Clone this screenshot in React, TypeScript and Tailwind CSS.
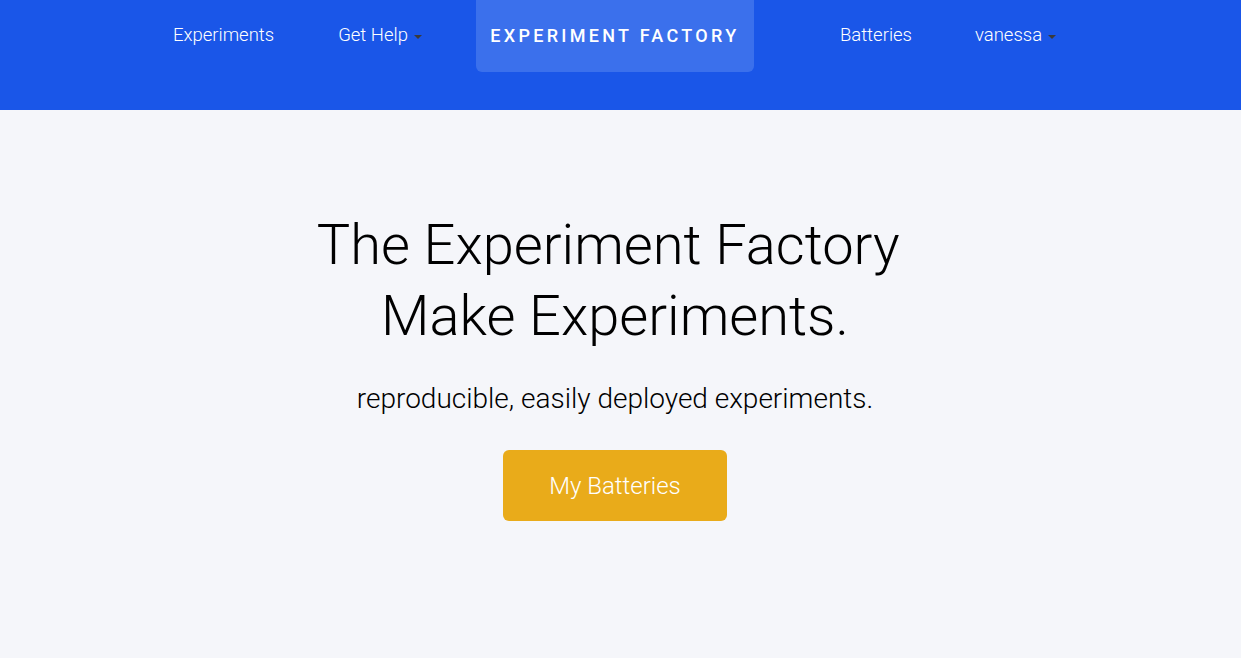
import React from 'react';

function Caret() {
    return (
        <span className="inline-block ml-[6px] mt-[2px] w-0 h-0 border-l-[4px] border-r-[4px] border-t-[4px] border-l-transparent border-r-transparent border-t-[#3a3a3a]" />
    );
}

export default function App() {
    return (
        <div className="min-h-[658px] bg-[#f5f6fa] font-['Roboto',sans-serif]">

            {/* NAV */}
            <header className="h-[110px] bg-[#1a56e8]">
                <nav className="flex justify-center items-start pr-[12px] text-[18.5px] font-light text-white">

                    <a className="h-[72px] flex items-center">Experiments</a>

                    <a className="ml-[64px] h-[72px] flex items-center">
                        Get Help
                        <Caret />
                    </a>

                    <a className="ml-[54px] h-[72px] pb-[2px] w-[278px] flex items-center justify-center rounded-b-md bg-[#3b70ec] text-[18px] font-medium tracking-[3.3px]">
                        EXPERIMENT FACTORY
                    </a>

                    <a className="ml-[86px] h-[72px] flex items-center">Batteries</a>

                    <a className="ml-[63px] h-[72px] flex items-center">
                        vanessa
                        <Caret />
                    </a>

                </nav>
            </header>

            {/* HERO */}
            <section className="pt-[100px] pr-[11px] flex flex-col items-center text-center text-black">

                <h1 className="text-[56px] leading-[71px] font-light">
                    The Experiment Factory{'\u00a0'}
                    <br />
                    Make Experiments.
                </h1>

                <p className="mt-[27px] text-[28px] leading-[40px] font-light">
                    reproducible, easily deployed experiments.
                </p>

                <button className="mt-[31px] w-[224px] h-[71px] rounded-md bg-[#e9ab1a] text-white text-[24px] font-light">
                    My Batteries
                </button>

            </section>

        </div>
    );
}
